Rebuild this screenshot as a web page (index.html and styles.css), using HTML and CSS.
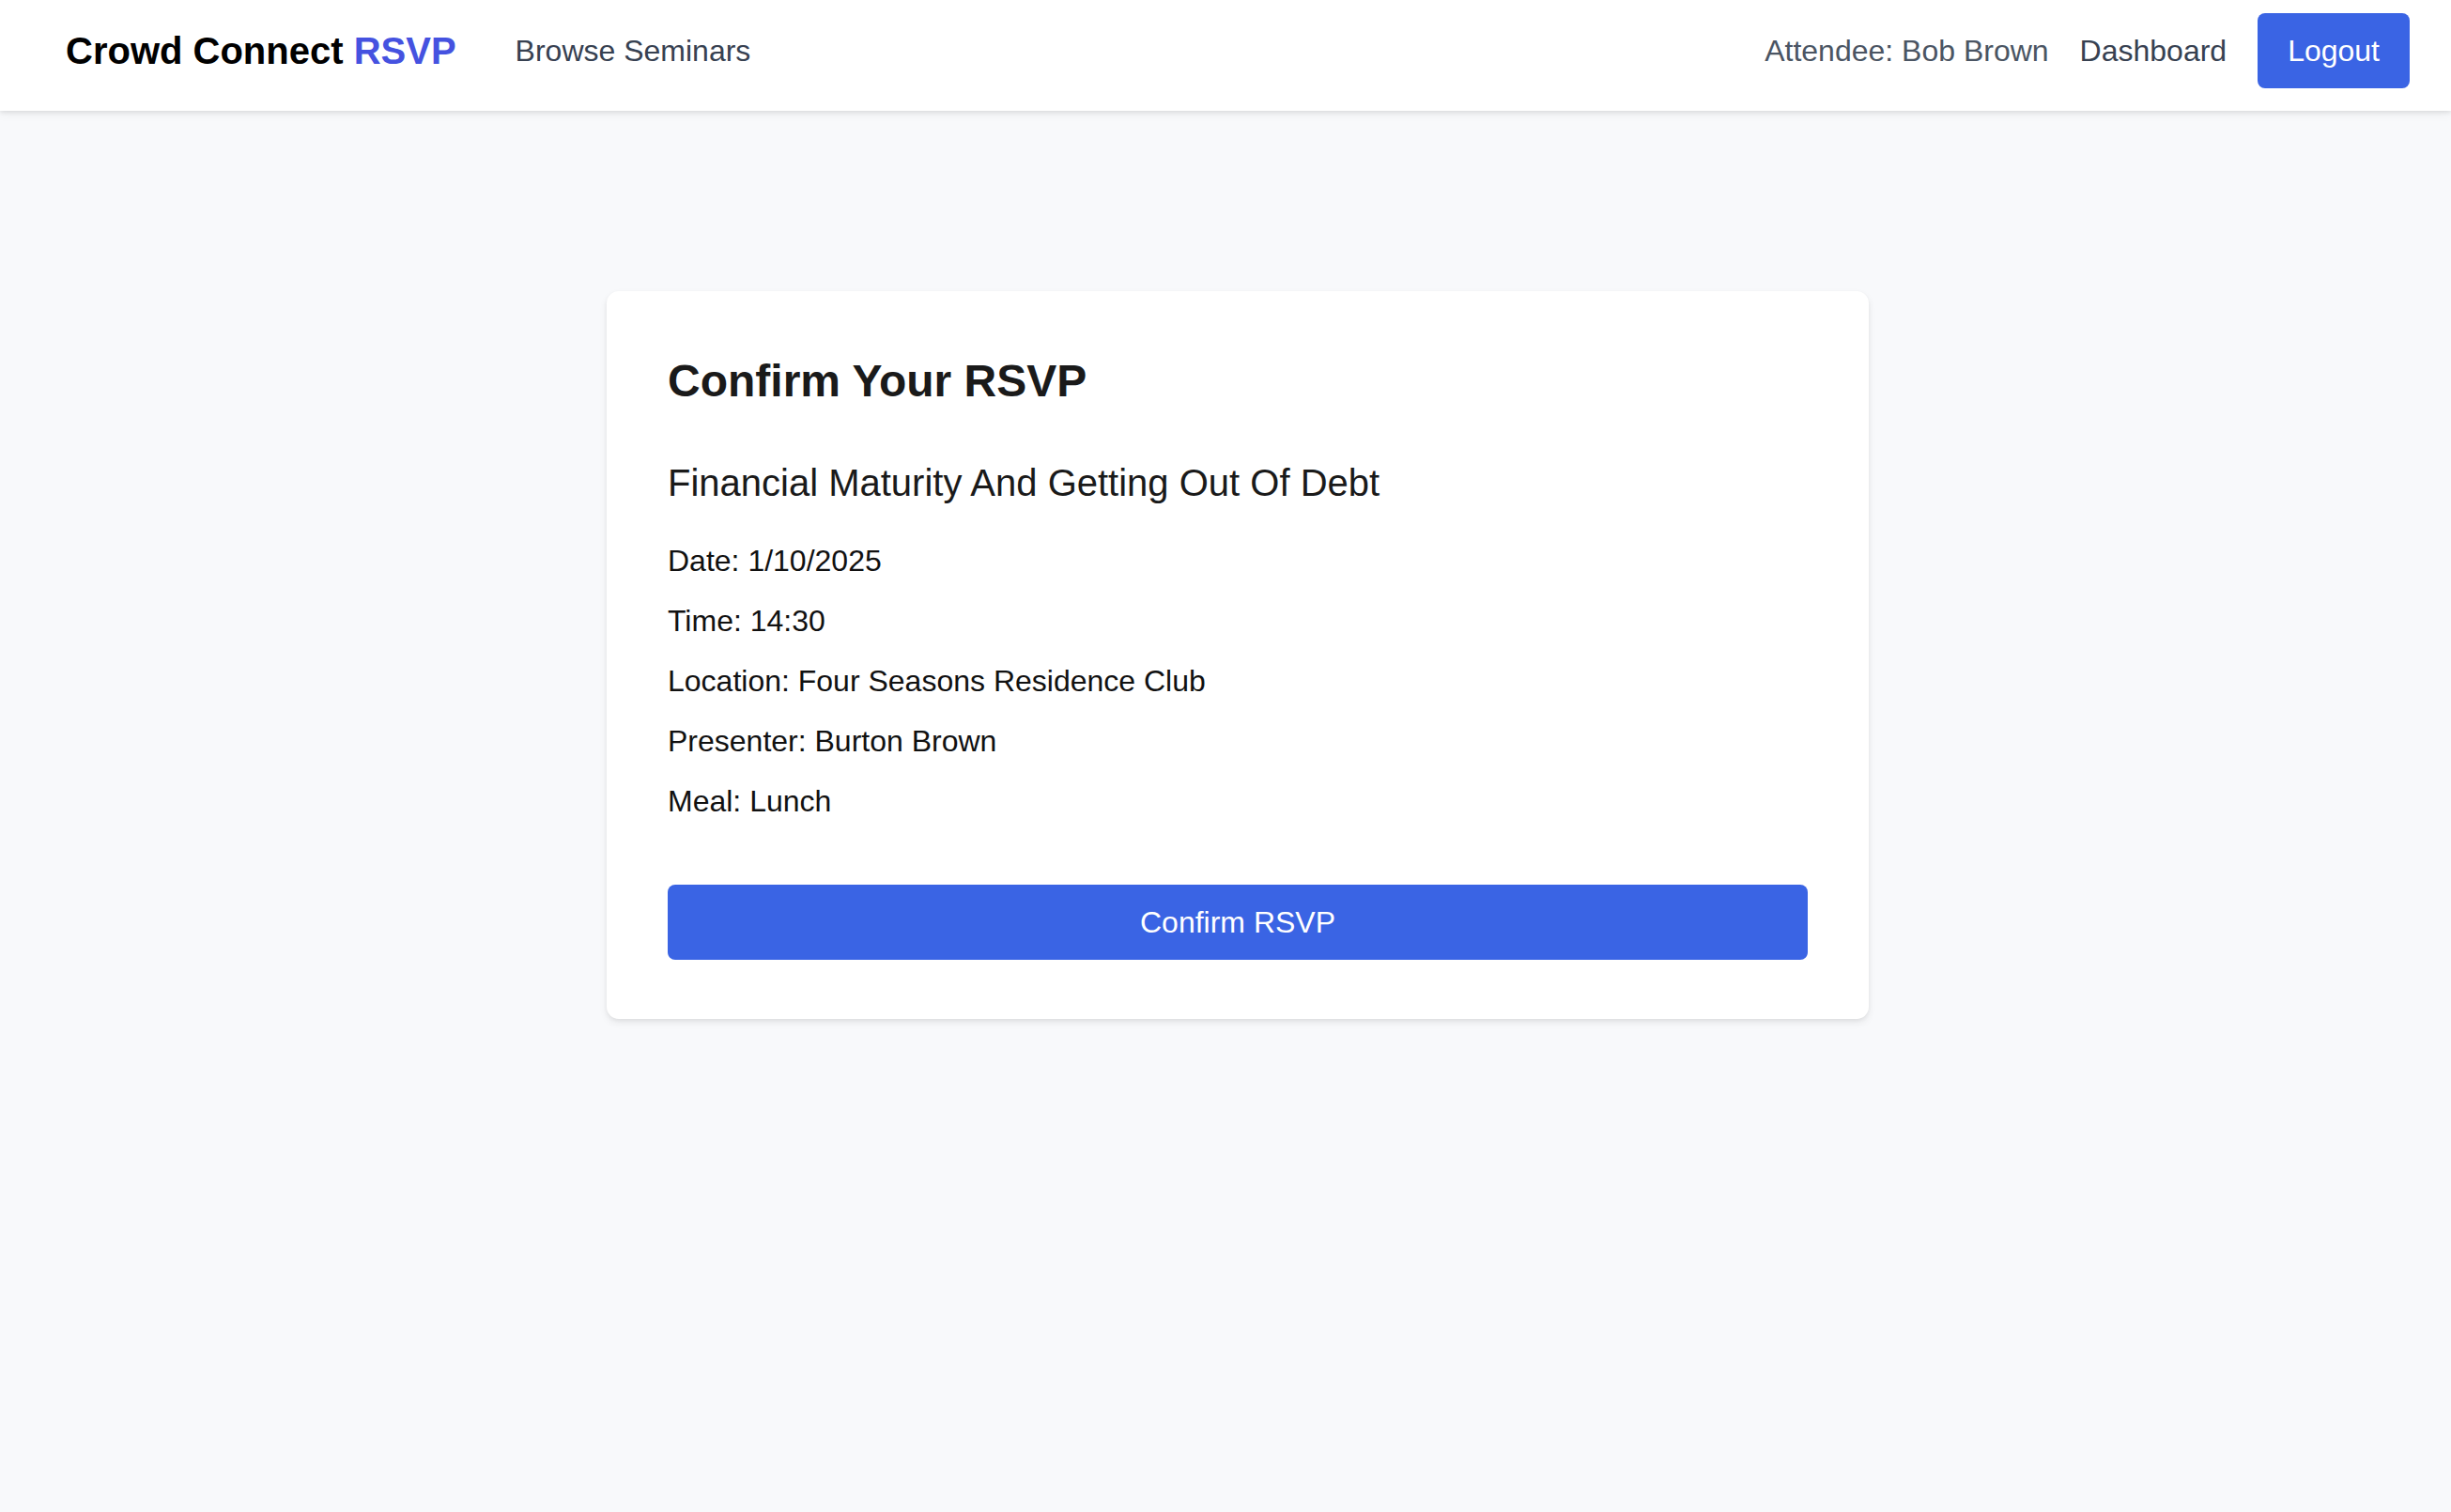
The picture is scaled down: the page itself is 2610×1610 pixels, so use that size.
FILE: index.html
```html
<!DOCTYPE html>
<html lang="en">
<head>
<meta charset="utf-8">
<title>Crowd Connect RSVP</title>
<link rel="stylesheet" href="styles.css">
</head>
<body>
<header class="topbar">
  <div class="left">
    <a class="brand" href="#">Crowd Connect <span class="brand-accent">RSVP</span></a>
    <a class="nav-link" href="#">Browse Seminars</a>
  </div>
  <div class="right">
    <span class="user">Attendee: Bob Brown</span>
    <a class="nav-link dark" href="#">Dashboard</a>
    <button class="btn-logout" type="button">Logout</button>
  </div>
</header>
<main class="main">
  <section class="card">
    <h1 class="card-title">Confirm Your RSVP</h1>
    <h2 class="seminar">Financial Maturity And Getting Out Of Debt</h2>
    <div class="details">
      <p>Date: 1/10/2025</p>
      <p>Time: 14:30</p>
      <p>Location: Four Seasons Residence Club</p>
      <p>Presenter: Burton Brown</p>
      <p>Meal: Lunch</p>
    </div>
    <button class="btn-confirm" type="button">Confirm RSVP</button>
  </section>
</main>
</body>
</html>
```
FILE: styles.css
```css
* { box-sizing: border-box; }
html, body { margin: 0; padding: 0; }
body {
  font-family: "Liberation Sans", Arial, Helvetica, sans-serif;
  background: #f8f9fb;
  min-height: 1610px;
  color: #111;
}
a { text-decoration: none; }

.topbar {
  height: 118px;
  background: #fff;
  display: flex;
  justify-content: space-between;
  align-items: center;
  padding: 14px 44px 24px 70px;
  box-shadow: 0 2px 4px rgba(0,0,0,0.08), 0 4px 10px rgba(0,0,0,0.05);
  position: relative;
}
.left, .right { display: flex; align-items: center; }
.left { gap: 63px; }
.right { gap: 33px; }
.brand {
  font-size: 40px;
  font-weight: 700;
  color: #000;
  line-height: 48px;
}
.brand-accent { color: #4552e0; }
.nav-link {
  font-size: 32px;
  color: #374151;
  line-height: 48px;
}
.user {
  font-size: 32px;
  color: #4b5563;
  line-height: 48px;
}
.btn-logout {
  font-family: inherit;
  font-size: 32px;
  line-height: 48px;
  height: 80px;
  padding: 16px 32px;
  background: #3a64e4;
  color: #fff;
  border: 0;
  border-radius: 8px;
}

.main {
  display: flex;
  justify-content: center;
  padding: 192px 0 0 26px;
}
.card {
  width: 1344px;
  background: #fff;
  border-radius: 13px;
  padding: 68px 65px 63px 65px;
  box-shadow: 0 4px 8px rgba(0,0,0,0.07), 0 2px 4px rgba(0,0,0,0.05);
}
.card-title {
  margin: 0 0 50px 0;
  font-size: 48px;
  line-height: 56px;
  font-weight: 700;
  color: #1a1a1a;
}
.seminar {
  margin: 0 0 29px 0;
  font-size: 40px;
  line-height: 60px;
  font-weight: 400;
  color: #1a1a1a;
}
.details {
  display: flex;
  flex-direction: column;
  gap: 16px;
}
.details p {
  margin: 0;
  font-size: 32px;
  line-height: 48px;
  color: #111;
}
.btn-confirm {
  display: block;
  width: 100%;
  margin-top: 65px;
  height: 80px;
  font-family: inherit;
  font-size: 32px;
  line-height: 48px;
  background: #3a64e4;
  color: #fff;
  border: 0;
  border-radius: 8px;
}
```
